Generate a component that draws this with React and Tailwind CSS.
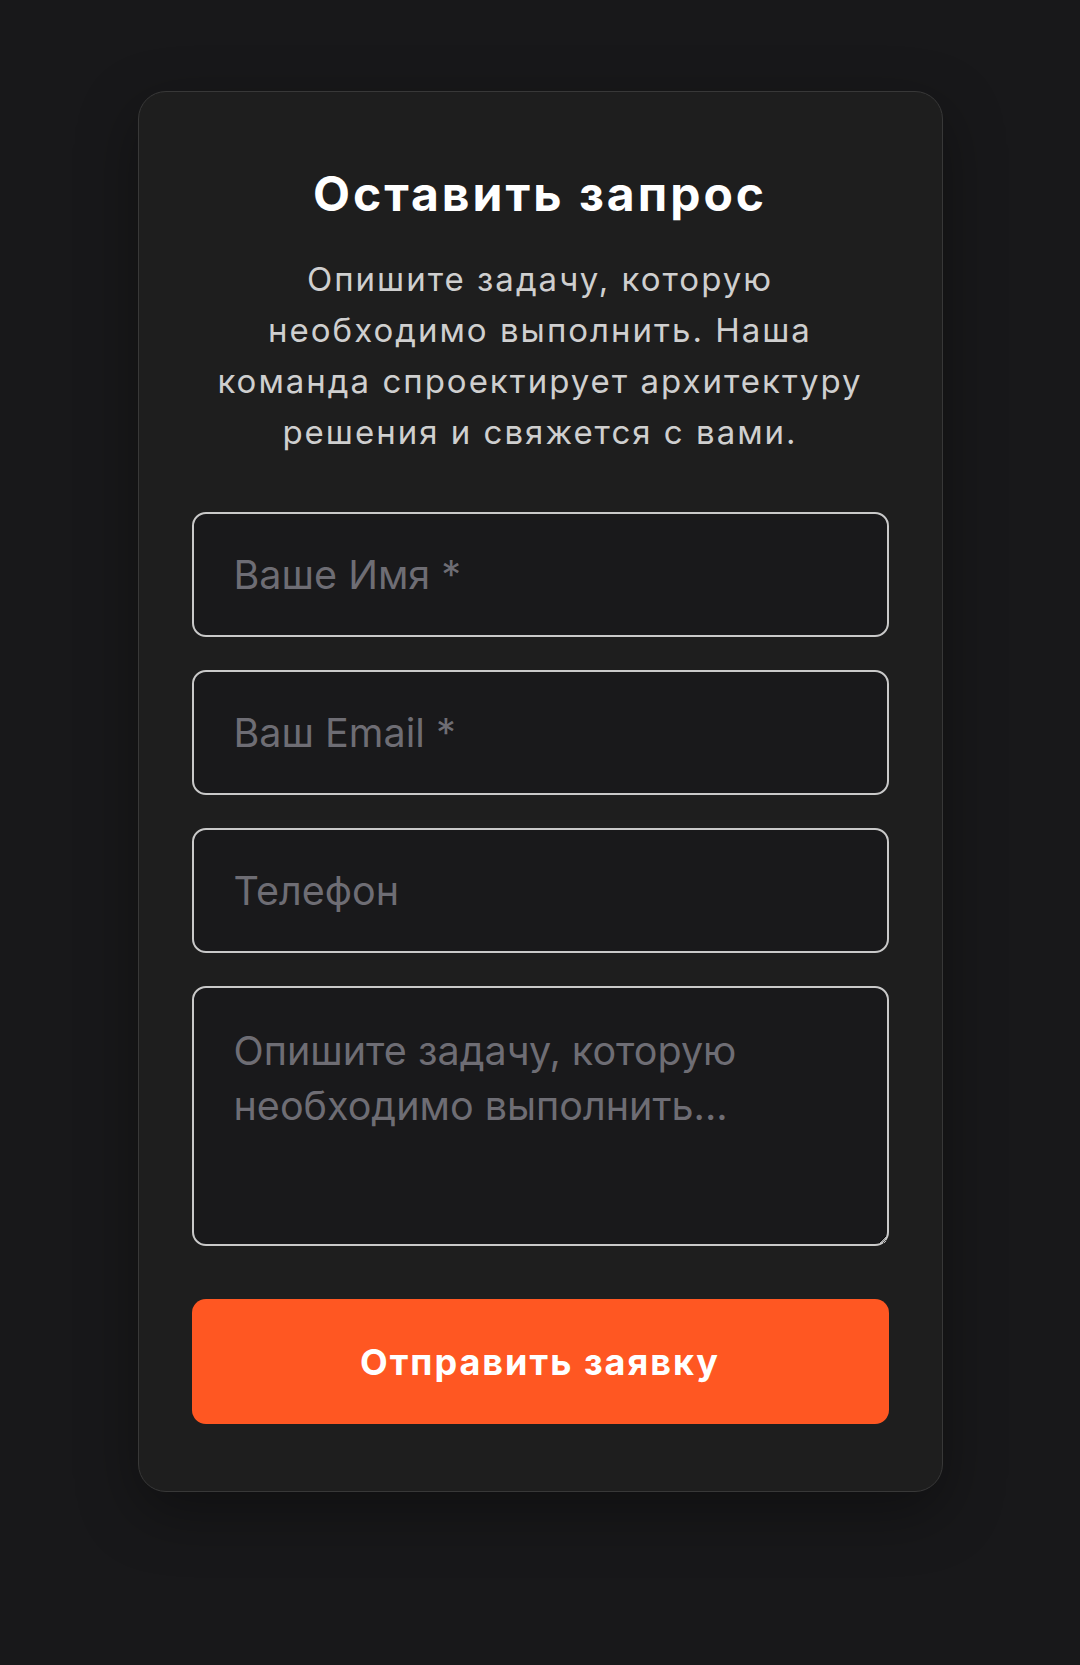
import React from "react";

export default function App() {
  return (
    <div className="min-h-screen w-full bg-[#18181a] flex justify-center pt-[91px] pb-[173px]" style={{ fontFamily: "Inter, 'Noto Sans', sans-serif" }}>
      <div className="w-[805px] rounded-[28px] border border-[#383838] bg-[#1e1e1e] px-[53px] pt-[73px] pb-[67px] shadow-[0_20px_60px_rgba(0,0,0,0.35)] flex flex-col items-center">
        <h2 className="text-[48px] leading-[1.2] font-bold text-white text-center tracking-[3px]">
          Оставить запрос
        </h2>
        <p className="mt-[31px] max-w-[660px] text-center text-[33px] leading-[1.55] tracking-[2px] text-[#cfcfcf]">
          Опишите задачу, которую необходимо выполнить. Наша команда спроектирует архитектуру решения и свяжется с вами.
        </p>
        <form className="mt-[54px] w-full flex flex-col" onSubmit={(e) => e.preventDefault()}>
          <div className="flex flex-col gap-[33px]">
            <input
              type="text"
              placeholder="Ваше Имя *"
              className="w-full h-[125px] rounded-[14px] border-2 border-[#c9c9c9] bg-[#19191b] px-10 text-[39.5px] text-white placeholder:text-[#6e6d74] outline-none"
            />
            <input
              type="email"
              placeholder="Ваш Email *"
              className="w-full h-[125px] rounded-[14px] border-2 border-[#c9c9c9] bg-[#19191b] px-10 text-[39.5px] text-white placeholder:text-[#6e6d74] outline-none"
            />
            <input
              type="tel"
              placeholder="Телефон"
              className="w-full h-[125px] rounded-[14px] border-2 border-[#c9c9c9] bg-[#19191b] px-10 text-[39.5px] text-white placeholder:text-[#6e6d74] outline-none"
            />
            <textarea
              placeholder="Опишите задачу, которую необходимо выполнить..."
              className="w-full h-[260px] rounded-[14px] border-2 border-[#c9c9c9] bg-[#19191b] px-10 pt-[36px] pb-6 text-[39.5px] leading-[1.4] text-white placeholder:text-[#6e6d74] outline-none"
            />
          </div>
          <button
            type="submit"
            className="mt-[53px] w-full h-[125px] rounded-[14px] bg-[#ff5722] text-white text-[36px] font-bold tracking-[2px]"
          >
            Отправить заявку
          </button>
        </form>
      </div>
    </div>
  );
}
